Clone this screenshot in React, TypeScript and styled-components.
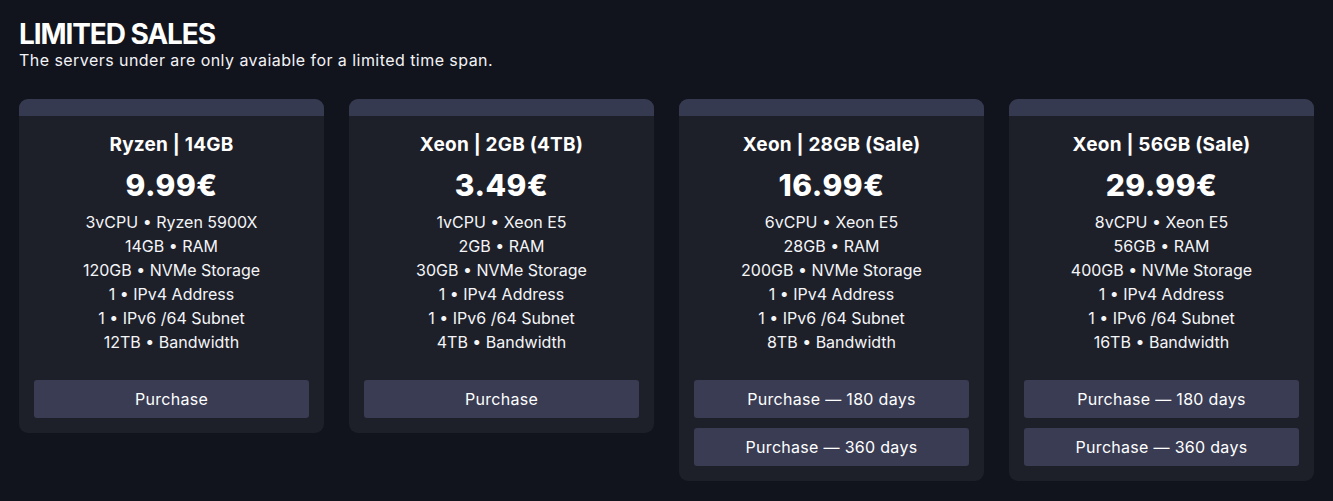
import React from "react";
import styled, { createGlobalStyle } from "styled-components";

const Global = createGlobalStyle`
  html, body { margin: 0; padding: 0; background: #12141d; }
  body { font-family: "Inter", "Liberation Sans", sans-serif; color: #ffffff; }
`;

const Page = styled.div`
  padding: 18px 19px 20px 19px;
  min-height: 501px;
  box-sizing: border-box;
  background: #12141d;
`;

const Heading = styled.h1`
  margin: 0;
  font-size: 28px;
  font-weight: 700;
  line-height: 32px;
  letter-spacing: -1.1px;
`;

const Sub = styled.p`
  margin: 0;
  font-size: 16px;
  line-height: 20px;
  letter-spacing: 0.45px;
  color: #f2f3f7;
`;

const Grid = styled.div`
  display: grid;
  grid-template-columns: repeat(4, 305px);
  column-gap: 25px;
  align-items: start;
  margin-top: 29px;
`;

const Card = styled.div`
  background: #1e2029;
  border-radius: 9px;
  overflow: hidden;
  display: flex;
  flex-direction: column;
`;

const CardTop = styled.div`
  height: 17px;
  background: #363a50;
`;

const CardBody = styled.div`
  display: flex;
  flex-direction: column;
  align-items: center;
  padding: 16px 15px 15px;
`;

const Title = styled.div`
  font-size: 19px;
  font-weight: 700;
  line-height: 26px;
  letter-spacing: 0.2px;
`;

const Price = styled.div`
  font-size: 30px;
  font-weight: 800;
  line-height: 36px;
  letter-spacing: 0.5px;
  margin-top: 9px;
  margin-bottom: 7px;
`;

const Feature = styled.div`
  font-size: 16px;
  line-height: 24px;
  color: #f4f5f8;
`;

const Buttons = styled.div`
  display: flex;
  flex-direction: column;
  gap: 10px;
  width: 100%;
  margin-top: 26px;
`;

const Button = styled.button`
  height: 38px;
  width: 100%;
  border: none;
  border-radius: 3px;
  background: #393c53;
  color: #ffffff;
  font-family: inherit;
  font-size: 16px;
  letter-spacing: 0.3px;
  cursor: pointer;
`;

type Plan = {
  title: string;
  price: string;
  features: string[];
  buttons: string[];
};

const plans: Plan[] = [
  {
    title: "Ryzen | 14GB",
    price: "9.99€",
    features: [
      "3vCPU • Ryzen 5900X",
      "14GB • RAM",
      "120GB • NVMe Storage",
      "1 • IPv4 Address",
      "1 • IPv6 /64 Subnet",
      "12TB • Bandwidth",
    ],
    buttons: ["Purchase"],
  },
  {
    title: "Xeon | 2GB (4TB)",
    price: "3.49€",
    features: [
      "1vCPU • Xeon E5",
      "2GB • RAM",
      "30GB • NVMe Storage",
      "1 • IPv4 Address",
      "1 • IPv6 /64 Subnet",
      "4TB • Bandwidth",
    ],
    buttons: ["Purchase"],
  },
  {
    title: "Xeon | 28GB (Sale)",
    price: "16.99€",
    features: [
      "6vCPU • Xeon E5",
      "28GB • RAM",
      "200GB • NVMe Storage",
      "1 • IPv4 Address",
      "1 • IPv6 /64 Subnet",
      "8TB • Bandwidth",
    ],
    buttons: ["Purchase — 180 days", "Purchase — 360 days"],
  },
  {
    title: "Xeon | 56GB (Sale)",
    price: "29.99€",
    features: [
      "8vCPU • Xeon E5",
      "56GB • RAM",
      "400GB • NVMe Storage",
      "1 • IPv4 Address",
      "1 • IPv6 /64 Subnet",
      "16TB • Bandwidth",
    ],
    buttons: ["Purchase — 180 days", "Purchase — 360 days"],
  },
];

export default function App() {
  return (
    <>
      <Global />
      <Page>
        <Heading>LIMITED SALES</Heading>
        <Sub>The servers under are only avaiable for a limited time span.</Sub>
        <Grid>
          {plans.map((p) => (
            <Card key={p.title}>
              <CardTop />
              <CardBody>
                <Title>{p.title}</Title>
                <Price>{p.price}</Price>
                {p.features.map((f) => (
                  <Feature key={f}>{f}</Feature>
                ))}
                <Buttons>
                  {p.buttons.map((b) => (
                    <Button key={b}>{b}</Button>
                  ))}
                </Buttons>
              </CardBody>
            </Card>
          ))}
        </Grid>
      </Page>
    </>
  );
}
